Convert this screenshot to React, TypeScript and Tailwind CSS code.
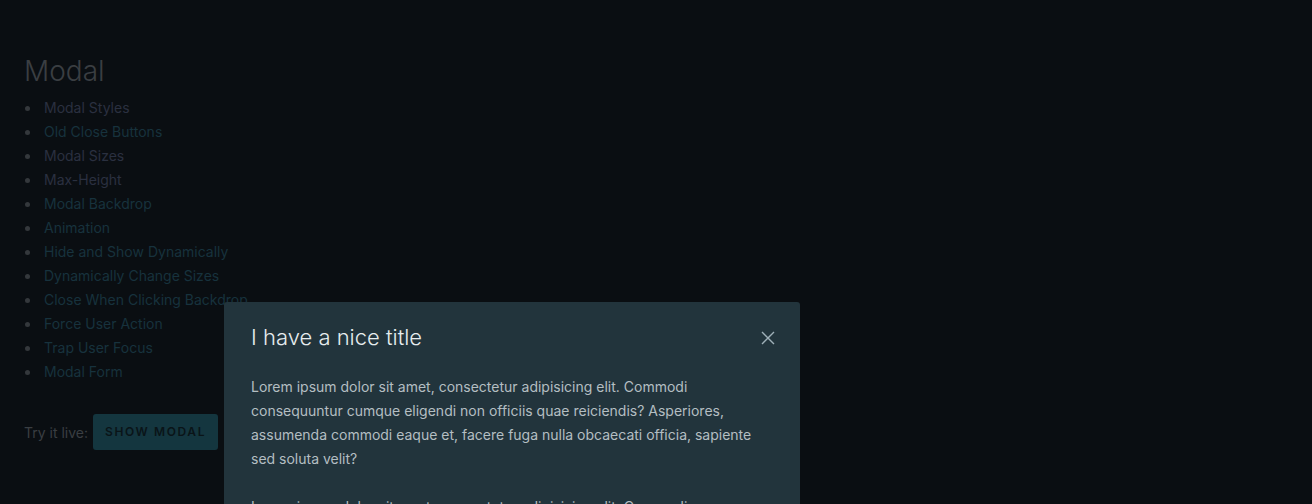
import React from "react";

const items: { label: string; visited: boolean }[] = [
  { label: "Modal Styles", visited: true },
  { label: "Old Close Buttons", visited: false },
  { label: "Modal Sizes", visited: true },
  { label: "Max-Height", visited: true },
  { label: "Modal Backdrop", visited: false },
  { label: "Animation", visited: false },
  { label: "Hide and Show Dynamically", visited: false },
  { label: "Dynamically Change Sizes", visited: false },
  { label: "Close When Clicking Backdrop", visited: false },
  { label: "Force User Action", visited: false },
  { label: "Trap User Focus", visited: false },
  { label: "Modal Form", visited: false },
];

const para =
  "Lorem ipsum dolor sit amet, consectetur adipisicing elit. Commodi consequuntur cumque eligendi non officiis quae reiciendis? Asperiores, assumenda commodi eaque et, facere fuga nulla obcaecati officia, sapiente sed soluta velit?";

export default function App() {
  return (
    <div
      className="relative w-[1312px] h-[504px] overflow-hidden bg-[#0a0e12]"
      style={{ fontFamily: "Inter, 'Noto Sans', sans-serif" }}
    >
      <div className="px-6 pt-[51px]">
        <h2 className="text-[28px] leading-[40px] font-light text-[#3a3e42]">
          Modal
        </h2>
        <ul className="mt-[5px] text-[14px] leading-[24px]">
          {items.map((it) => (
            <li key={it.label} className="flex items-center">
              <span className="ml-[1px] w-[5px] h-[5px] rounded-full bg-[#34383c]" />
              <span className={"ml-[14px] " + (it.visited ? "text-[#2a3040]" : "text-[#17323d]")}>{it.label}</span>
            </li>
          ))}
        </ul>
        <div className="mt-[30px] flex items-center gap-[5px]">
          <span className="text-[14px] text-[#3a3e42]">Try it live:</span>
          <button className="h-[36px] px-[12px] rounded-[3px] bg-[#14363f] text-[#0a1418] text-[12px] font-semibold tracking-[1.6px] uppercase">
            Show Modal
          </button>
        </div>
      </div>

      <div className="absolute left-[224px] top-[302px] w-[576px] h-[260px] bg-[#22343c] rounded-t-[3px] px-[27px] pt-[19px]">
        <div className="flex items-start justify-between">
          <h3 className="text-[22px] leading-[32px] font-light text-[#e6ecee]">
            I have a nice title
          </h3>
          <svg width="16" height="16" viewBox="0 0 16 16" className="mt-[9px] mr-[-3px]">
            <path d="M2 2 L14 14 M14 2 L2 14" stroke="#9fb0b8" strokeWidth="1.4" fill="none" />
          </svg>
        </div>
        <p className="mt-[22px] text-[14px] leading-[24px] text-[#b4bec2]">{para}</p>
        <p className="mt-[24px] text-[14px] leading-[24px] text-[#b4bec2]">{para}</p>
      </div>
    </div>
  );
}
